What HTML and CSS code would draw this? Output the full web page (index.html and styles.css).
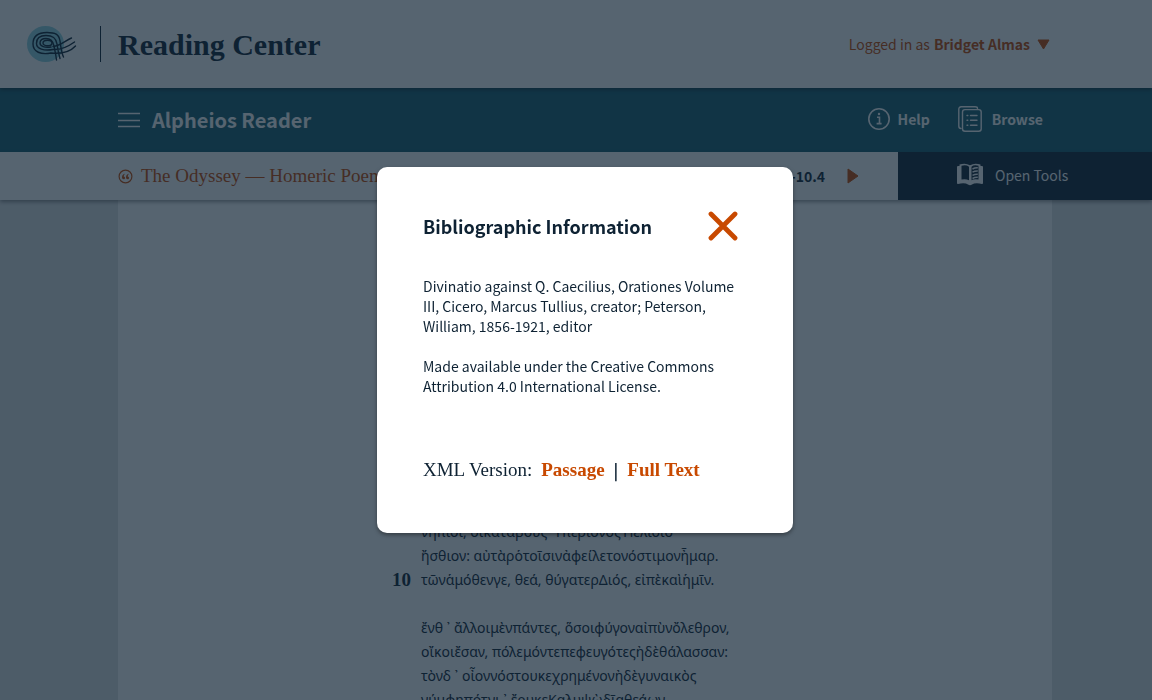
FILE: index.html
```html
<!DOCTYPE html>
<html lang="en">
<head>
<meta charset="utf-8">
<title>Alpheios Reading Center</title>
<link rel="stylesheet" href="styles.css">
</head>
<body>
<div class="page">
  <header class="masthead">
    <svg class="logo" width="50" height="40" viewBox="0 0 50 40" aria-label="Alpheios">
      <ellipse cx="18.500" cy="20" rx="18.500" ry="18" fill="#8fd3e0"/>
      <g fill="none" stroke="#0e2233" stroke-width="1.400" stroke-linecap="round">
        <path d="M48.500 22C43 28 34 30 24 29C14 31 6 28 6 20C6 11 12 8.500 20 8.500C28 8.500 32 10 33 17C34 25 35 30 36.500 33"/>
        <path d="M47.500 18C42 22 35 26 26 25.500C17 27 9.500 25 9.500 19.500C9.500 14 13 11.500 19 11.500C26 11.500 29 14 30 20C31 27 32 31 33 34.500"/>
        <path d="M44.500 14C39 16 34 21.500 26 22.500"/>
        <path d="M24 23C18 24 13 22.500 13 19C13 16 15 14.500 19 14.500C24 14.500 26 17 27 22C28 27 29 31 29.500 36"/>
        <ellipse cx="20.500" cy="19" rx="4.500" ry="2.800"/>
      </g>
    </svg>
    <h1 class="site-title">Reading Center</h1>
    <button class="account" type="button">Logged in as <b>Bridget Almas</b>
      <svg width="13" height="11" viewBox="0 0 13 11" aria-hidden="true"><path d="M1 1H12L6.500 10Z" fill="currentColor" stroke="currentColor" stroke-linejoin="round"/></svg>
    </button>
  </header>
  <nav class="navbar">
    <button class="menu" type="button" aria-label="Menu">
      <svg width="22" height="16" viewBox="0 0 22 16"><path d="M0 1.500H22M0 8.500H22M0 14.500H22" stroke="currentColor" stroke-width="1.300"/></svg>
    </button>
    <h2 class="app-title">Alpheios Reader</h2>
    <a class="nav-link" href="#help">
      <svg width="22" height="22" viewBox="0 0 22 22" fill="none" stroke="currentColor" stroke-width="1.600" aria-hidden="true"><circle cx="11" cy="11" r="10.200"/><path d="M9 9.200H11.500V15.500M8.600 15.600H13.600"/><circle cx="11" cy="6" r="1.200" fill="currentColor" stroke="none"/></svg>
      Help
    </a>
    <a class="nav-link nav-link-browse" href="#browse">
      <svg width="24" height="26" viewBox="0 0 24 26" fill="none" stroke="currentColor" stroke-width="1.400" stroke-linecap="round" aria-hidden="true"><rect x="4.500" y="3.600" width="18.700" height="21.600" rx="2.500"/><path d="M3 22.500Q.8 22.500 .8 20V3.200Q.8 .8 3.200 .8H17Q19.500 .8 19.500 2.500M9 9.500H9.800M12.500 9.500H19M9 14.300H9.800M12.500 14.300H19M9 19.300H9.800M12.500 19.300H19"/></svg>
      Browse
    </a>
  </nav>
  <div class="textbar">
    <div class="work">
      <svg width="15" height="15" viewBox="0 0 15 15" aria-hidden="true"><circle cx="7.500" cy="7.500" r="6.400" fill="none" stroke="currentColor" stroke-width="1.200"/><path d="M7 4.800C5.700 5 4 6.200 4 8.300C4 9.600 4.700 10.200 5.600 10.200C6.400 10.200 7 9.700 7 8.900C7 8.100 6.500 7.700 5.700 7.600C5.700 6.600 6.200 5.700 7 4.800ZM11 4.800C9.700 5 8 6.200 8 8.300C8 9.600 8.700 10.200 9.600 10.200C10.400 10.200 11 9.700 11 8.900C11 8.100 10.500 7.700 9.700 7.600C9.700 6.600 10.200 5.700 11 4.800Z" fill="currentColor"/></svg>
      <span class="work-title">The Odyssey — Homeric Poems</span>
    </div>
    <div class="passage">
      <span>10.1-10.4</span>
      <button class="next" type="button" aria-label="Next passage"><svg width="12" height="16" viewBox="0 0 12 16"><path d="M1 1V15L11 8Z" fill="currentColor" stroke="currentColor" stroke-linejoin="round"/></svg></button>
    </div>
    <button class="tools" type="button">
      <svg width="26" height="23" viewBox="0 0 26 23" aria-hidden="true"><path d="M2.500 1.500Q8.500 -.5 13 2.200Q17.500 -.5 23.500 1.500V3H25Q26 3 26 4V20Q26 21 25 20.900Q18 19.500 15 21.500Q13 23 11 21.500Q8 19.500 1 20.900Q0 21 0 20V4Q0 3 1 3H2.500Z" fill="currentColor"/><path d="M4.500 2.800Q9 1.500 12 3.700V17.300Q9 15.600 4.500 16.500ZM14.500 3.700Q17 1.500 21.500 2.800V16.500Q17 15.600 14.500 17.300Z" class="page-cut"/><path d="M15.500 6Q18 4.600 20.800 4.800M15.500 9.200Q18 7.800 20.800 8M15.500 12.400Q18 11 20.800 11.200M15.500 15.500Q18 14.100 20.800 14.300" fill="none" stroke="currentColor" stroke-width="1.500"/></svg>
      Open Tools
    </button>
  </div>
  <main class="reader">
    <article class="text">
      <div class="verse"><p lang="grc">νήπιοι, οἳκατὰβοῦς ὙπερίονοςἨελίοιο</p></div>
      <div class="verse"><p lang="grc">ἤσθιον: αὐτὰρὁτοῖσινἀφείλετονόστιμονἦμαρ.</p></div>
      <div class="verse"><b class="line-no">10</b><p lang="grc">τῶνἁμόθενγε, θεά, θύγατερΔιός, εἰπὲκαὶἡμῖν.</p></div>
      <div class="verse verse-break"><p lang="grc">ἔνθ ᾽ ἄλλοιμὲνπάντες, ὅσοιφύγοναἰπὺνὄλεθρον,</p></div>
      <div class="verse"><p lang="grc">οἴκοιἔσαν, πόλεμόντεπεφευγότεςἠδὲθάλασσαν:</p></div>
      <div class="verse"><p lang="grc">τὸνδ ᾽ οἶοννόστουκεχρημένονἠδὲγυναικὸς</p></div>
      <div class="verse"><p lang="grc">νύμφηπότνι ᾽ ἔρυκεΚαλυψὼδῖαθεάων</p></div>
    </article>
  </main>
</div>
<div class="overlay">
  <section class="dialog" role="dialog" aria-modal="true" aria-labelledby="dialog-title">
    <div class="dialog-head">
      <h2 class="dialog-title" id="dialog-title">Bibliographic Information</h2>
      <button class="close" type="button" aria-label="Close"><svg width="30" height="30" viewBox="0 0 30 30"><path d="M3 3L27 27M27 3L3 27" stroke="currentColor" stroke-width="4.800" stroke-linecap="round"/></svg></button>
    </div>
    <p class="info">Divinatio against Q. Caecilius, Orationes Volume III, Cicero, Marcus Tullius, creator; Peterson, William, 1856-1921, editor</p>
    <p class="info">Made available under the Creative Commons Attribution 4.0 International License.</p>
    <div class="versions"><span>XML Version:</span><a href="#passage">Passage</a><b class="bar">|</b><a href="#full">Full Text</a></div>
  </section>
</div>
</body>
</html>
```
FILE: styles.css
```css
:root {
  --ink: #0e2233;
  --orange: #c84900;
  --sans: "Noto Sans CJK SC", "Noto Sans", sans-serif;
  --serif: "Liberation Serif", serif;
}
* { box-sizing: border-box; }
body {
  margin: 0;
  overflow: hidden;
  font-family: var(--sans);
  color: var(--ink);
}
h1, h2, p { margin: 0; }
button {
  margin: 0;
  padding: 0;
  border: 0;
  background: none;
  font: inherit;
  color: inherit;
}
a { color: inherit; text-decoration: none; }
svg { display: block; flex: none; }

.page { display: flex; flex-direction: column; height: 100vh; }

.masthead {
  display: flex;
  align-items: center;
  height: 88px;
  padding: 0 102px 0 27px;
  background: #fff;
  box-shadow: 0 2px 4px rgba(0, 0, 0, .4);
  z-index: 2;
}
.site-title {
  margin-left: 23px;
  padding: 2px 0 0 17px;
  border-left: 1px solid var(--ink);
  font: bold 30px/34px var(--serif);
}
.account {
  display: flex;
  align-items: center;
  gap: 4px;
  margin-left: auto;
  font-size: 14px;
  line-height: 20px;
  color: var(--orange);
}
.account svg { margin-left: 3px; }

.navbar {
  display: flex;
  align-items: center;
  height: 64px;
  padding: 0 109px 0 118px;
  background: #185f70;
  color: #fff;
}
.app-title { margin: 0 auto 0 12px; font-size: 20px; line-height: 28px; }
.nav-link {
  display: flex;
  align-items: center;
  gap: 8px;
  padding-bottom: 3px;
  font-size: 14px;
  font-weight: bold;
  line-height: 20px;
}
.nav-link-browse { gap: 10px; margin-left: 28px; }

.textbar {
  display: flex;
  height: 48px;
  padding-left: 118px;
  background: #fff;
  box-shadow: 0 2px 4px rgba(0, 0, 0, .4);
  z-index: 1;
}
.work {
  display: flex;
  align-items: center;
  gap: 8px;
  color: var(--orange);
  font: 19px/24px var(--serif);
}
.passage {
  display: flex;
  align-items: center;
  gap: 22px;
  margin-left: auto;
  margin-right: 39px;
  font-size: 14px;
  font-weight: bold;
}
.next { color: var(--orange); }
.tools {
  display: flex;
  align-items: center;
  gap: 12px;
  width: 254px;
  padding: 0 0 3px 59px;
  background: var(--ink);
  color: #fff;
  font-size: 14px;
}
.page-cut { fill: var(--ink); }

.reader {
  display: flex;
  flex: 1;
  min-height: 0;
  padding: 0 100px 0 118px;
  background: #e2e4e5;
}
.text {
  flex: 1;
  padding: 320px 0 0 265px;
  background: #fff;
  overflow: hidden;
}
.verse {
  display: grid;
  grid-template-columns: 28px 1fr;
  column-gap: 10px;
  line-height: 24px;
  white-space: nowrap;
}
.verse p { grid-column: 2; font-family: "Noto Sans", sans-serif; font-size: 14px; }
.verse-break { margin-top: 24px; }
.line-no { grid-column: 1; grid-row: 1; text-align: right; font: bold 19px/24px var(--serif); }

.overlay {
  position: fixed;
  inset: 0;
  z-index: 3;
  display: flex;
  align-items: center;
  justify-content: center;
  padding-left: 18px;
  background: rgba(14, 34, 51, .7);
}
.dialog {
  width: 416px;
  padding: 43px 46px 50px;
  border-radius: 10px;
  background: #fff;
  box-shadow: 0 2px 4px rgba(0, 0, 0, .4);
}
.dialog-head {
  display: flex;
  align-items: center;
  justify-content: space-between;
  padding-right: 9px;
  margin-bottom: 34px;
}
.dialog-title { font-size: 18px; line-height: 32px; }
.close { color: var(--orange); }
.info { margin-bottom: 20px; font-size: 14px; line-height: 20px; }
.versions {
  display: flex;
  align-items: center;
  gap: 9px;
  margin-top: 61px;
  font: 19px/26px var(--serif);
}
.versions a { font-weight: bold; color: var(--orange); }
.bar { font-family: var(--sans); font-size: 16px; }
```
